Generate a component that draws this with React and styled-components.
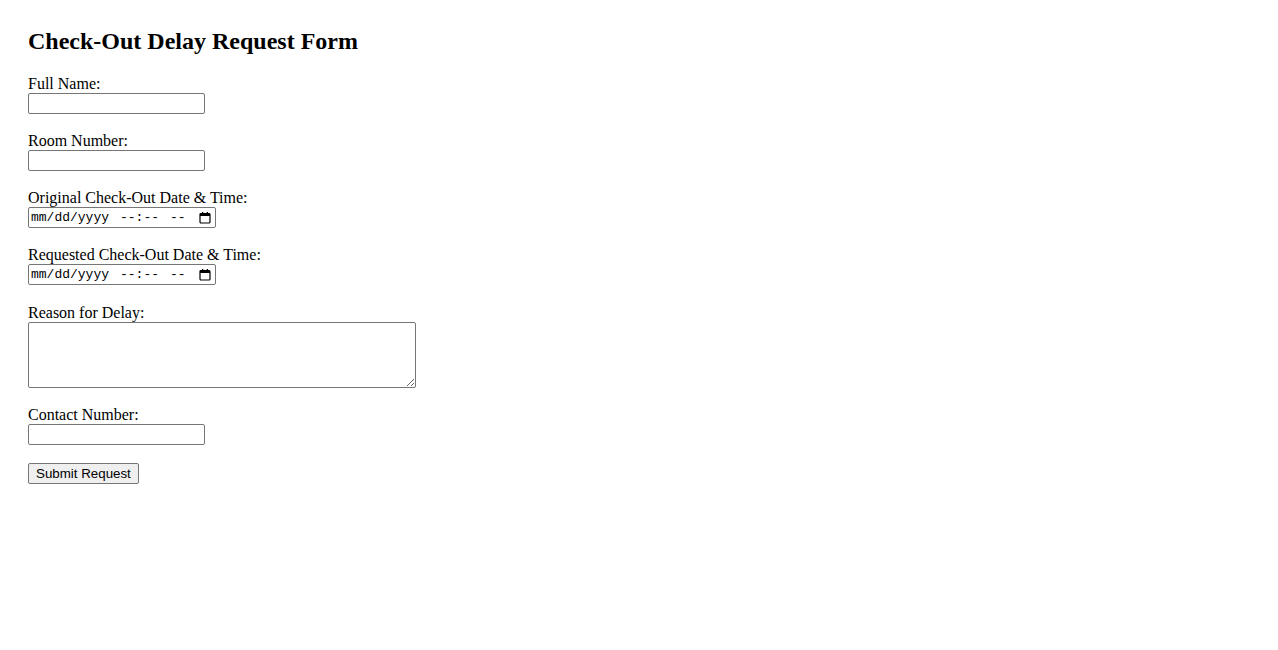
import React from 'react'
import styled, { createGlobalStyle } from 'styled-components'

const GlobalStyle = createGlobalStyle`
  body {
    margin: 0;
    background: #ffffff;
    color: #000000;
    font-family: "Liberation Serif", "Times New Roman", serif;
    font-size: 16px;
  }
`
const Page = styled.div`
  padding: 28px;
`
const Title = styled.h2`
  margin: 0 0 20px 0;
  font-size: 24px;
  font-weight: bold;
  line-height: 27px;
`
const Form = styled.form`
  display: flex;
  flex-direction: column;
  align-items: flex-start;
`
const Label = styled.label`
  display: block;
  margin-top: ${(p) => p.$offset || 0}px;
  line-height: 18px;
`
const TextInput = styled.input`
  box-sizing: border-box;
  display: block;
  width: 177px;
  height: 21px;
  margin: 0 0 18px 0;
  padding: 1px 2px;
  border: 1px solid #767676;
  border-radius: 2px;
  background: #ffffff;
  font-family: "Liberation Sans", Arial, sans-serif;
  font-size: 13.33px;
`
const DateBox = styled.div`
  box-sizing: border-box;
  display: flex;
  align-items: center;
  width: 188px;
  height: 21px;
  margin: 0 0 18px 0;
  padding: 0 3px 0 2px;
  border: 1px solid #767676;
  border-radius: 2px;
  background: #ffffff;
  font-family: "Liberation Mono", "Courier New", monospace;
  font-size: 13px;
  color: #000000;
  cursor: text;
`
const DatePart = styled.span`
  margin-left: ${(p) => p.$gap || 0}px;
  white-space: pre;
`
const CalendarIcon = styled.svg`
  margin-left: auto;
  margin-right: 1px;
  display: block;
`
const TextArea = styled.textarea`
  box-sizing: border-box;
  display: block;
  width: 388px;
  height: 66px;
  margin: 0 0 18px 0;
  padding: 2px;
  border: 1px solid #767676;
  border-radius: 2px;
  font-family: "Liberation Mono", monospace;
  font-size: 13.33px;
`
const SubmitButton = styled.button`
  box-sizing: border-box;
  height: 21px;
  padding: 1px 7px;
  border: 1px solid #767676;
  border-radius: 2px;
  background: #efefef;
  color: #000000;
  font-family: "Liberation Sans", Arial, sans-serif;
  font-size: 13.33px;
  line-height: 15px;
`

function DateField({ id }) {
  return (
    <DateBox id={id} role="textbox" tabIndex={0}>
      <DatePart>mm/dd/yyyy</DatePart>
      <DatePart $gap={11}>--:--</DatePart>
      <DatePart $gap={11}>--</DatePart>
      <CalendarIcon width="12" height="12" viewBox="0 0 12 12">
        <rect x="1" y="1.5" width="10" height="9.5" rx="1" fill="none" stroke="#000" strokeWidth="1.2" />
        <rect x="1" y="1.5" width="10" height="2.5" fill="#000" />
        <rect x="3" y="0" width="1.3" height="2" fill="#000" />
        <rect x="7.7" y="0" width="1.3" height="2" fill="#000" />
      </CalendarIcon>
    </DateBox>
  )
}

const fields = [
  { id: 'name', label: 'Full Name:', kind: 'text' },
  { id: 'room', label: 'Room Number:', kind: 'text' },
  { id: 'original', label: 'Original Check-Out Date & Time:', kind: 'date' },
  { id: 'requested', label: 'Requested Check-Out Date & Time:', kind: 'date' },
  { id: 'reason', label: 'Reason for Delay:', kind: 'area', offset: 1 },
  { id: 'contact', label: 'Contact Number:', kind: 'text' },
]

function App() {
  return (
    <Page>
      <GlobalStyle />
      <Title>Check-Out Delay Request Form</Title>
      <Form onSubmit={(e) => e.preventDefault()}>
        {fields.map((field) => (
          <React.Fragment key={field.id}>
            <Label htmlFor={field.id} $offset={field.offset}>
              {field.label}
            </Label>
            {field.kind === 'text' && <TextInput type="text" id={field.id} />}
            {field.kind === 'date' && <DateField id={field.id} />}
            {field.kind === 'area' && <TextArea id={field.id} />}
          </React.Fragment>
        ))}
        <SubmitButton type="submit">Submit Request</SubmitButton>
      </Form>
    </Page>
  )
}

export default App
